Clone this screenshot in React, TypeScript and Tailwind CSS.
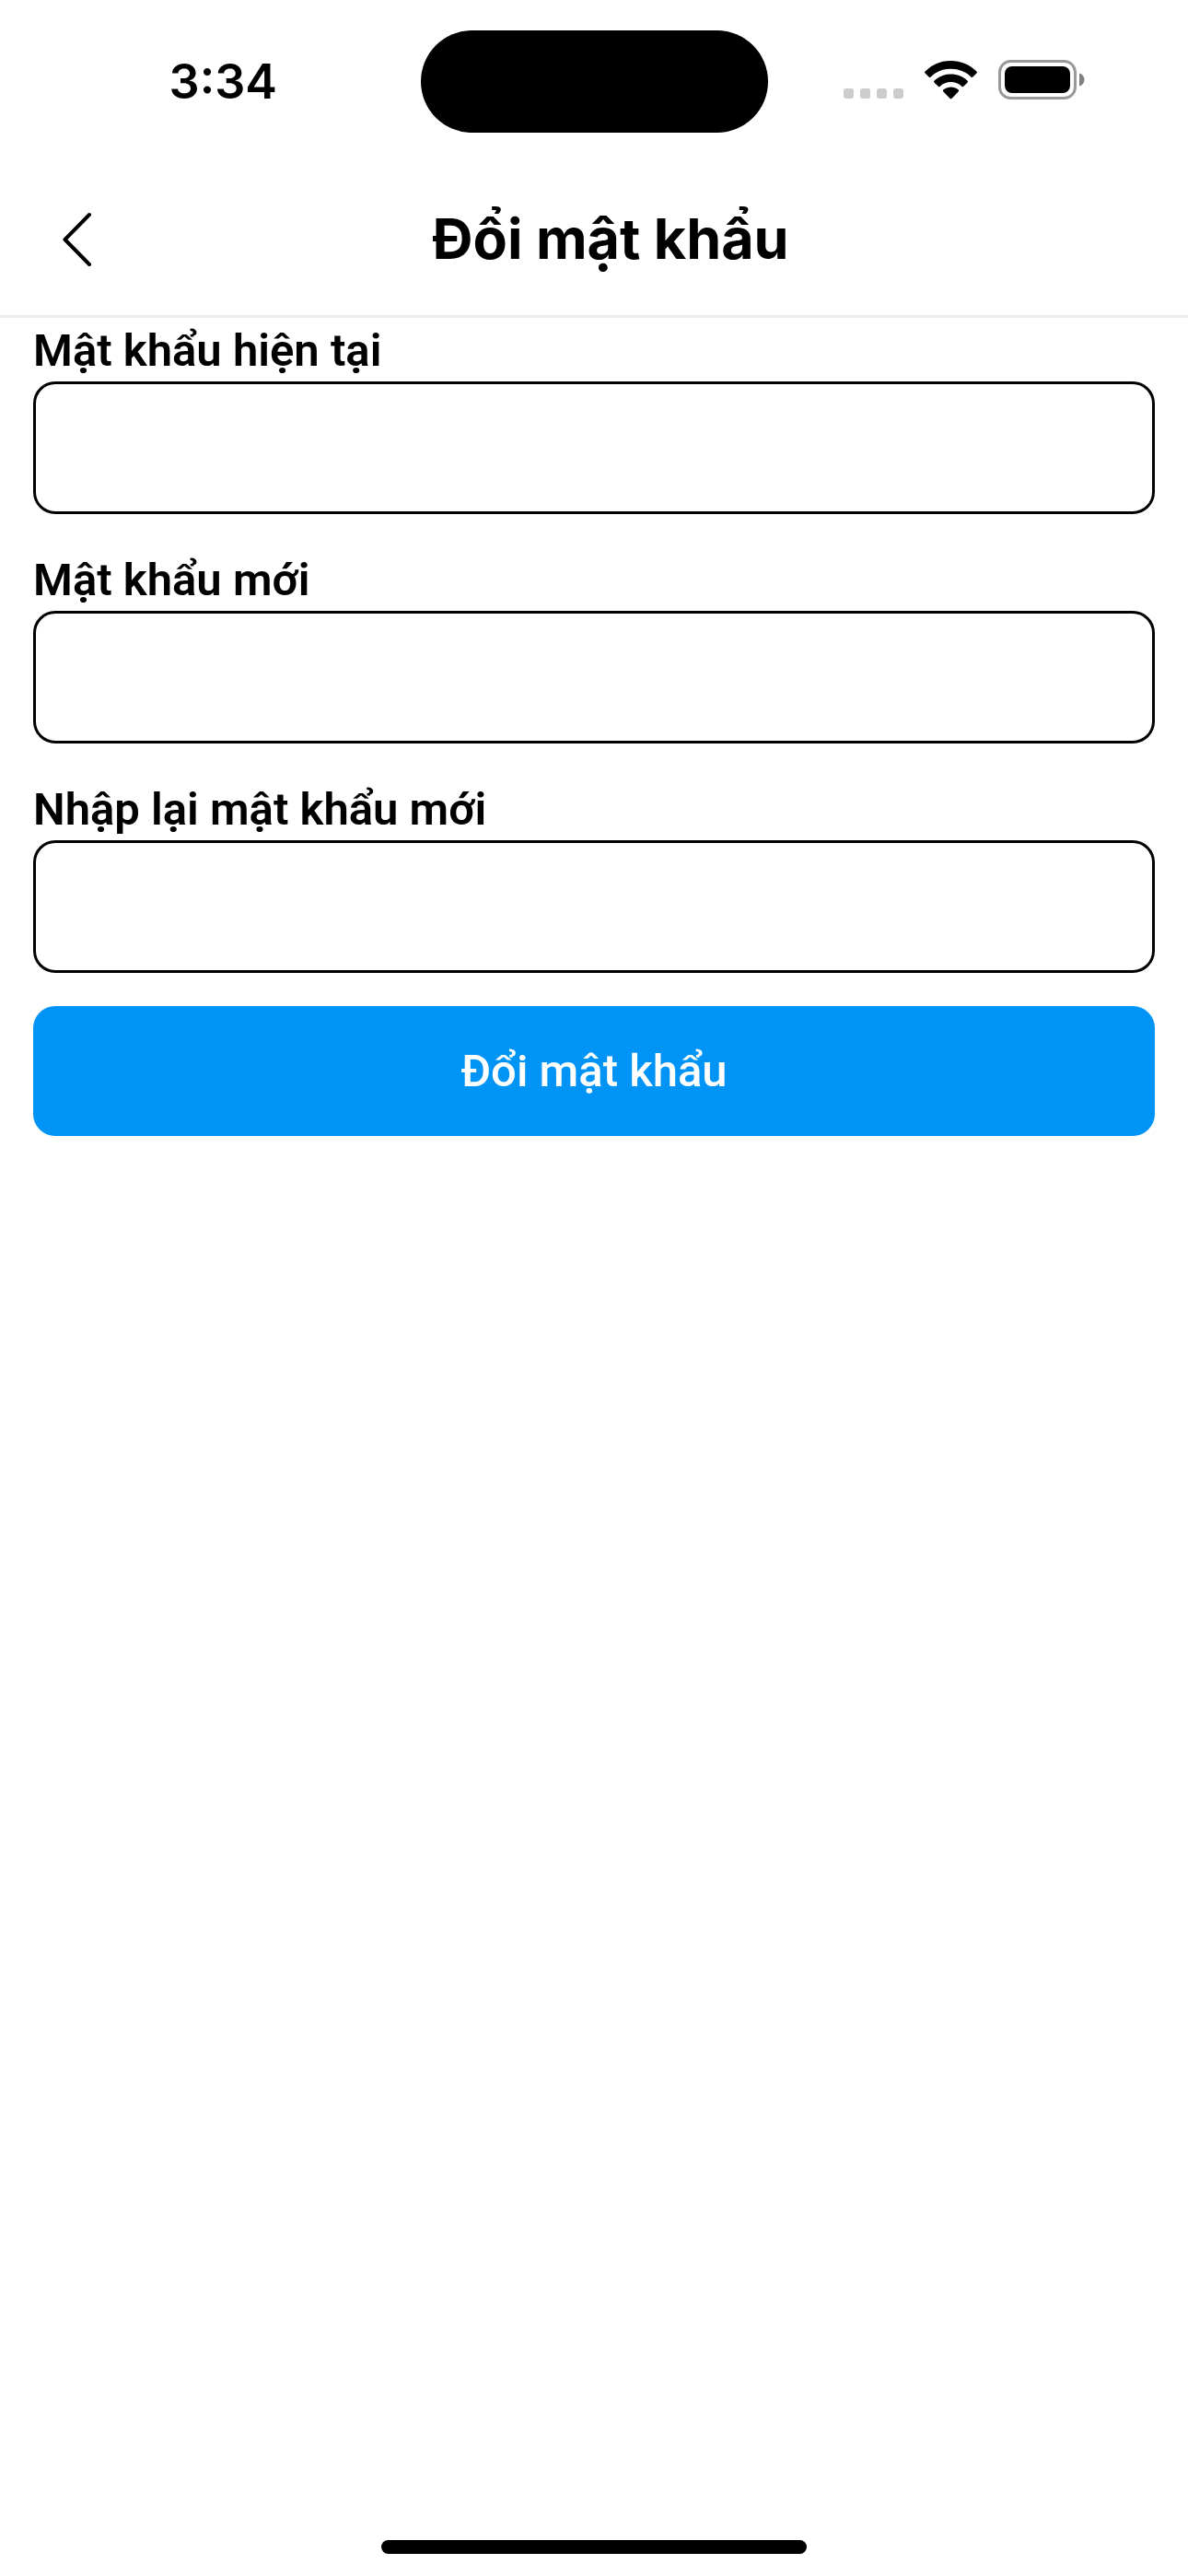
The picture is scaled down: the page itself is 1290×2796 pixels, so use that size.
import { useState } from 'react';

const fields = [
  { id: 'current-password', label: 'Mật khẩu hiện tại', autoComplete: 'current-password' },
  { id: 'new-password', label: 'Mật khẩu mới', autoComplete: 'new-password' },
  { id: 'confirm-password', label: 'Nhập lại mật khẩu mới', autoComplete: 'new-password' },
];

function WifiIcon() {
  return (
    <svg viewBox="0 0 57 42" className="h-[42px] w-[57px]" aria-hidden="true">
      <path d="M28.5 0C39.2 0 49 4.2 56.2 11.2c.9.9 1 1.6.2 2.4l-3.7 3.7c-.8.8-1.5.8-2.3.1A31.5 31.5 0 0 0 28.5 8.8 31.5 31.5 0 0 0 6.6 17.4c-.8.7-1.5.7-2.3-.1L.6 13.6c-.8-.8-.7-1.5.2-2.4A39.6 39.6 0 0 1 28.5 0Z" />
      <path d="M28.5 14.5c6.9 0 13.1 2.6 17.8 6.9.9.8.9 1.5.1 2.3l-3.9 3.9c-.8.8-1.4.8-2.2.1a17.4 17.4 0 0 0-23.6 0c-.8.7-1.4.7-2.2-.1l-3.9-3.9c-.8-.8-.8-1.5.1-2.3a26.2 26.2 0 0 1 17.8-6.9Z" />
      <path d="M28.5 28.6c3 0 5.8 1 8 2.7.9.7.9 1.4.1 2.2l-7 7.2c-.8.8-1.4.8-2.2 0l-7-7.2c-.8-.8-.8-1.5.1-2.2a13 13 0 0 1 8-2.7Z" />
    </svg>
  );
}

function BatteryIcon() {
  return (
    <svg viewBox="0 0 94 43" className="h-[43px] w-[94px]" aria-hidden="true">
      <rect x="1.5" y="1.5" width="82" height="40" rx="12" fill="none" stroke="#999999" strokeWidth="3" />
      <rect x="7" y="7" width="71" height="29" rx="8" />
      <path d="M88 14.5c3.5 1 5.5 3.8 5.5 7s-2 6-5.5 7Z" fill="#808080" />
    </svg>
  );
}

function StatusBar() {
  return (
    <div className="grid h-[177px] grid-cols-[1fr_377px_1fr] items-start pt-[33px]">
      <div className="flex h-[111px] items-center justify-center pl-7 text-[52px] leading-none font-semibold">
        3:34
      </div>
      <div className="h-[111px] rounded-full bg-black" />
      <div className="flex h-[107px] items-center justify-end pr-28">
        <div className="flex gap-[7px] pt-[30px] pr-[23px]">
          {[0, 1, 2, 3].map((dot) => (
            <span key={dot} className="size-[11px] rounded-[3px] bg-[#cccccc]" />
          ))}
        </div>
        <WifiIcon />
        <div className="pl-[23px]">
          <BatteryIcon />
        </div>
      </div>
    </div>
  );
}

function Header() {
  return (
    <header className="flex h-[168px] items-center border-b-[3px] border-[#ededed] px-9">
      <button type="button" aria-label="Quay lại" className="flex h-24 w-24 items-center justify-center">
        <svg viewBox="0 0 32 60" className="h-[60px] w-8" aria-hidden="true">
          <path
            d="M29 3 2.5 30 29 57"
            fill="none"
            stroke="currentColor"
            strokeWidth="4"
            strokeLinecap="round"
            strokeLinejoin="round"
          />
        </svg>
      </button>
      <h1 className="flex-1 text-center text-[61px] leading-none font-bold">Đổi mật khẩu</h1>
      <div className="w-[60px]" />
    </header>
  );
}

export default function App() {
  const [values, setValues] = useState<Record<string, string>>({});

  return (
    <div className="flex min-h-screen flex-col bg-white font-['Inter',sans-serif] text-black">
      <StatusBar />
      <Header />
      <form
        className="flex flex-1 flex-col px-9 pt-3 font-['Roboto',sans-serif] text-[49px]"
        onSubmit={(event) => event.preventDefault()}
      >
        <div className="flex flex-col gap-12">
          {fields.map((field) => (
            <div key={field.id} className="flex flex-col">
              <label htmlFor={field.id} className="h-[57px] leading-[48px] font-semibold">
                {field.label}
              </label>
              <input
                id={field.id}
                type="password"
                autoComplete={field.autoComplete}
                value={values[field.id] ?? ''}
                onChange={(event) => setValues({ ...values, [field.id]: event.target.value })}
                className="h-36 w-full rounded-3xl border-[3px] border-black px-6"
              />
            </div>
          ))}
        </div>
        <button
          type="submit"
          className="mt-9 h-[141px] rounded-3xl bg-[#0094f7] font-medium text-white"
        >
          Đổi mật khẩu
        </button>
      </form>
      <div className="flex justify-center pb-6">
        <div className="h-[15px] w-[462px] rounded-full bg-black" />
      </div>
    </div>
  );
}
